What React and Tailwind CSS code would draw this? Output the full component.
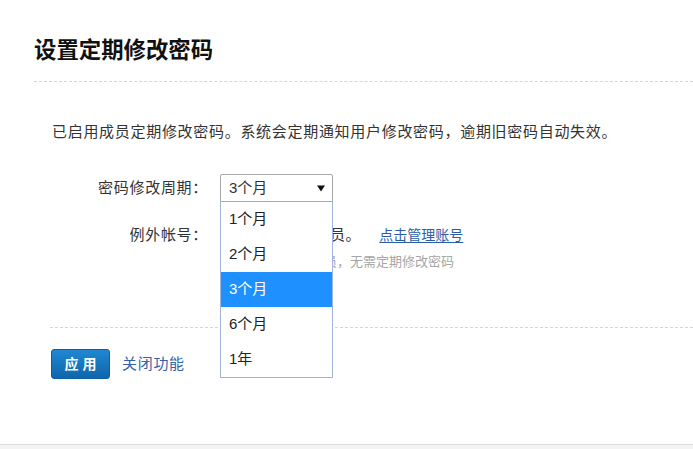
import React from "react";

const items = ["1个月", "2个月", "3个月", "6个月", "1年"];

export default function App() {
  return (
    <div
      className="w-[693px] h-[449px] bg-[#f3f3f3] overflow-hidden text-[#333]"
      style={{ fontFamily: '"Liberation Sans", "Noto Sans CJK SC", sans-serif' }}
    >
      <div className="h-[445px] bg-white border-b border-[#dcdcdc] pl-[34px]">
        <h1 className="pt-[38px] text-[22.4px] font-bold leading-[26px] text-[#111]">
          设置定期修改密码
        </h1>
        <div className="mt-[17px] border-t border-dashed border-[#d6d6d6]" />

        <div className="pl-[17px]">
          <p className="mt-[40px] text-[15px] leading-[20px] pl-[1px] tracking-[0.7px]">
            已启用成员定期修改密码。系统会定期通知用户修改密码，逾期旧密码自动失效。
          </p>

          <div className="mt-[32px] grid grid-cols-[157px_1fr] gap-x-[12px]">
            <div className="text-right text-[15px] leading-[28px] tracking-[0.7px]">密码修改周期：</div>
            <div>
              <div className="relative w-[113px]">
                <div className="h-[28px] border border-[#a9a9a9] rounded-t-[2px] flex items-center justify-between pl-[8px] pr-[7px] text-[15px] bg-white">
                  <span className="leading-[20px]">3个月</span>
                  <svg width="8" height="7" viewBox="0 0 8 7">
                    <path d="M0 0.5 L8 0.5 L4 6.5 Z" fill="#111" />
                  </svg>
                </div>
                <div className="absolute left-0 top-full w-[113px] z-10 bg-white border border-t-0 border-[#9fb5dd]">
                  {items.map((it) => (
                    <div
                      key={it}
                      className={
                        it === "3个月"
                          ? "h-[35px] flex items-center pl-[8px] text-[15px] bg-[#1e90ff] text-white"
                          : "h-[35px] flex items-center pl-[8px] text-[15px] text-[#222]"
                      }
                    >
                      {it}
                    </div>
                  ))}
                </div>
              </div>
            </div>

            <div className="mt-[23px] text-right text-[15px] leading-[20px] tracking-[0.7px]">例外帐号：</div>
            <div className="mt-[23px]">
              <div className="flex items-center text-[15px] leading-[20px]">
                <span className="tracking-[0.7px]">暂未设置例外成员。</span>
                <a className="ml-[18px] text-[14px] text-[#2a5caa] underline underline-offset-2 cursor-pointer">
                  点击管理账号
                </a>
              </div>
              <div className="mt-[7px] text-[13px] leading-[20px] text-[#a6a6a6]">
                加入例外帐号的成员，无需定期修改密码
              </div>
            </div>
          </div>

          <div className="mt-[55px] -ml-[1px] border-t border-dashed border-[#d6d6d6]" />

          <div className="mt-[21px] flex items-center">
            <button className="w-[59px] h-[30px] rounded-[3px] border border-[#0d5f9e] bg-gradient-to-b from-[#2187d2] to-[#0d66ad] text-white text-[14px] font-bold tracking-[4px] pl-[4px]">
              应用
            </button>
            <a className="ml-[12px] text-[15px] text-[#3461a8] tracking-[0.7px] cursor-pointer">关闭功能</a>
          </div>
        </div>
      </div>
    </div>
  );
}
